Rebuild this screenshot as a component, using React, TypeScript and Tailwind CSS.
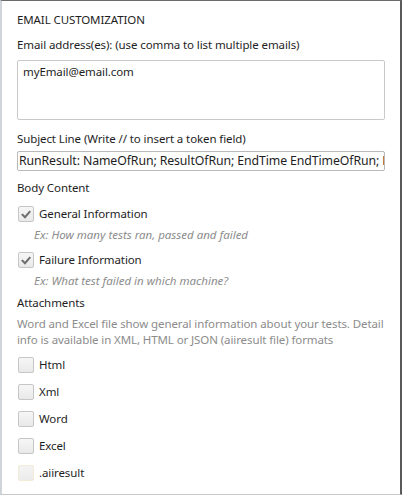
import React from "react";

const Check = ({ checked, warm }: { checked?: boolean; warm?: boolean }) => (
  <div
    className={
      "w-[16px] h-[16px] shrink-0 rounded-[2px] border flex items-center justify-center " +
      (warm
        ? "border-[#f3ead8] bg-[linear-gradient(#f4f4f4,#ebebeb)]"
        : "border-[#c6c6c6] bg-[linear-gradient(#f6f6f6,#e9e9e9)]")
    }
  >
    {checked && (
      <svg width="10" height="9" viewBox="0 0 10 9">
        <path d="M1.5 4.8 L4 7.2 L8.6 1.8" fill="none" stroke="#6e6e6e" strokeWidth="2" strokeLinecap="square" />
      </svg>
    )}
  </div>
);

const Row = ({ label, checked, warm, className }: { label: string; checked?: boolean; warm?: boolean; className?: string }) => (
  <div className={"flex items-center h-[16px] ml-[1px] " + (className || "")}>
    <Check checked={checked} warm={warm} />
    <span className="ml-[5px] leading-[16px] text-[#1e1e1e]">{label}</span>
  </div>
);

export default function App() {
  return (
    <div className="w-[402px] h-[497px] bg-white">
      <div
        className="h-[495px] border-t border-t-[#6b6b6b] border-l-2 border-l-[#cfd3da] border-r-2 border-r-[#5a5a5a] border-b border-b-[#c8c8c8] pl-[15px] pr-[15px] text-[11.5px] tracking-[-0.1px] leading-[16px] text-[#1e1e1e]"
        style={{ fontFamily: '"Noto Sans", "Open Sans", sans-serif' }}
      >
        <div className="pt-[11px]">EMAIL CUSTOMIZATION</div>
        <div className="mt-[9px]">Email address(es): (use comma to list multiple emails)</div>
        <div className="mt-[7px] h-[60px] border border-[#c9c9c9] rounded-[2px] px-[5px] pt-[3px]">myEmail@email.com</div>
        <div className="mt-[11px]">Subject Line (Write // to insert a token field)</div>
        <div className="mt-[4px] h-[20px] border border-[#b9b9b9] rounded-[2px] pl-[1px] overflow-hidden whitespace-nowrap leading-[18px] text-[12.3px]">
          RunResult: NameOfRun; ResultOfRun; EndTime EndTimeOfRun; EndTime
        </div>
        <div className="mt-[9px]">Body Content</div>
        <Row className="mt-[10px]" label="General Information" checked />
        <div className="mt-[5px] ml-[17px] italic text-[#8c8c8c] tracking-[0px]">Ex: How many tests ran, passed and failed</div>
        <Row className="mt-[9px]" label="Failure Information" checked />
        <div className="mt-[5px] ml-[17px] italic text-[#8c8c8c] tracking-[0px]">Ex: What test failed in which machine?</div>
        <div className="mt-[6px]">Attachments</div>
        <div className="mt-[5px] text-[#8c8c8c]">
          Word and Excel file show general information about your tests. Detail info is available in XML, HTML or JSON (aiiresult file) formats
        </div>
        <div className="mt-[9px] flex flex-col gap-[11px]">
          <Row label="Html" />
          <Row label="Xml" />
          <Row label="Word" />
          <Row label="Excel" />
          <Row label=".aiiresult" warm />
        </div>
      </div>
    </div>
  );
}
